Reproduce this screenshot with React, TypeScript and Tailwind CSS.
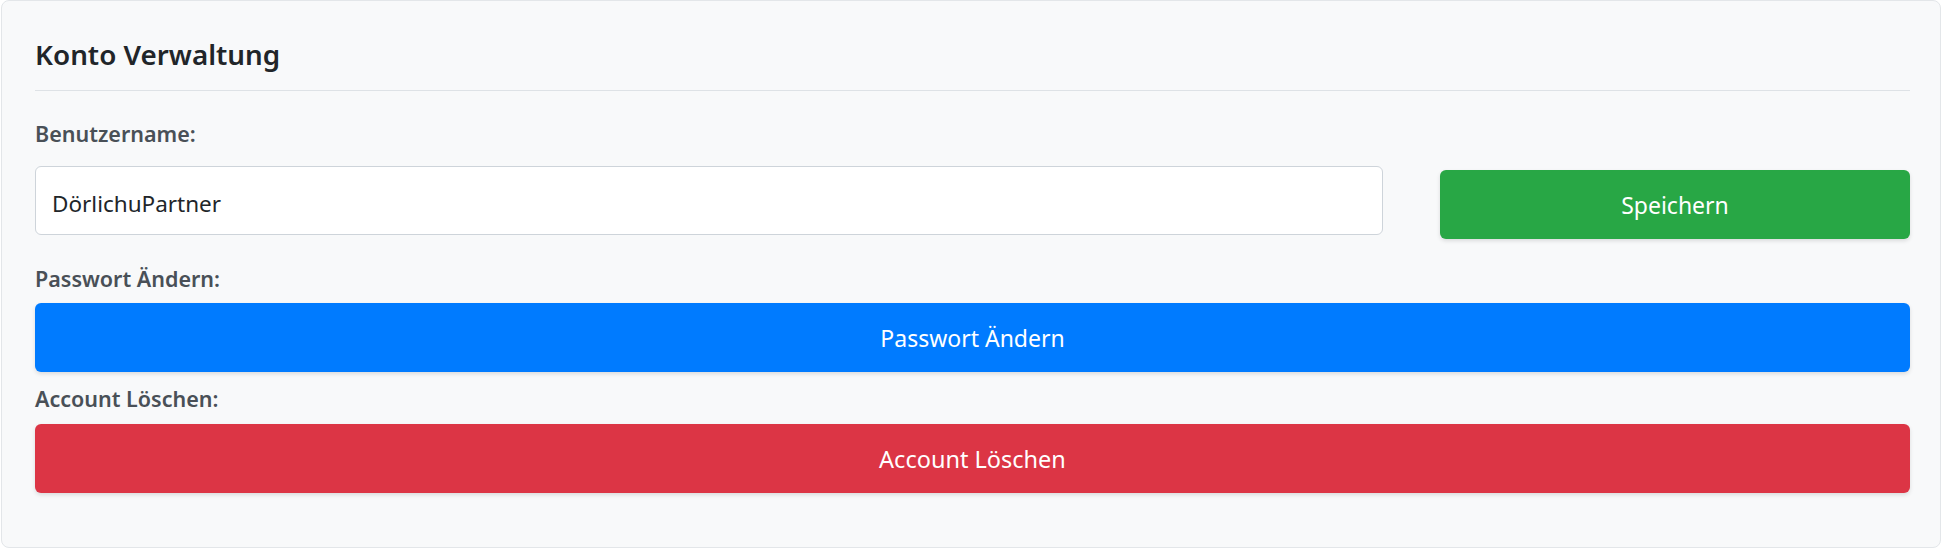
export default function App() {
  return (
    <div className="w-[1948px] h-[550px] bg-white pl-[1px] font-['Noto_Sans','Liberation_Sans',sans-serif]">
      <div className="w-[1940px] h-[548px] bg-[#f8f9fa] border border-[#e3e6e9] rounded-lg pl-[33px] pr-[30px] pt-[36px]">
        <h3 className="text-[27.8px] leading-[34px] font-semibold text-[#212529] pb-[19px] border-b border-[#dee2e6]">
          Konto Verwaltung
        </h3>

        <label className="block mt-[31px] text-[21.5px] leading-[24px] font-semibold text-[#495057]">
          Benutzername:
        </label>
        <div className="flex items-start h-[69px] mt-[20px]">
          <input
            defaultValue="DörlichuPartner"
            className="w-[1348px] h-[69px] bg-white border border-[#ced4da] rounded-md pl-[16px] pr-[16px] pt-[6px] text-[22.5px] text-[#212529] outline-none"
          />
          <button className="flex-1 ml-[57px] mt-[4px] h-[69px] pt-[2px] rounded-md bg-[#28a745] text-white text-[23px] shadow-[0_2px_4px_rgba(0,0,0,0.12)]">
            Speichern
          </button>
        </div>

        <label className="block mt-[32px] text-[21.5px] leading-[24px] font-semibold text-[#495057]">
          Passwort Ändern:
        </label>
        <button className="block w-full mt-[12px] h-[69px] pt-[2px] rounded-md bg-[#007bff] text-white text-[23px] shadow-[0_2px_4px_rgba(0,0,0,0.12)]">
          Passwort Ändern
        </button>

        <label className="block mt-[15px] text-[21.5px] leading-[24px] font-semibold text-[#495057]">
          Account Löschen:
        </label>
        <button className="block w-full mt-[13px] h-[69px] pt-[2px] rounded-md bg-[#dc3545] text-white text-[23.5px] shadow-[0_2px_4px_rgba(0,0,0,0.12)]">
          Account Löschen
        </button>
      </div>
    </div>
  );
}
